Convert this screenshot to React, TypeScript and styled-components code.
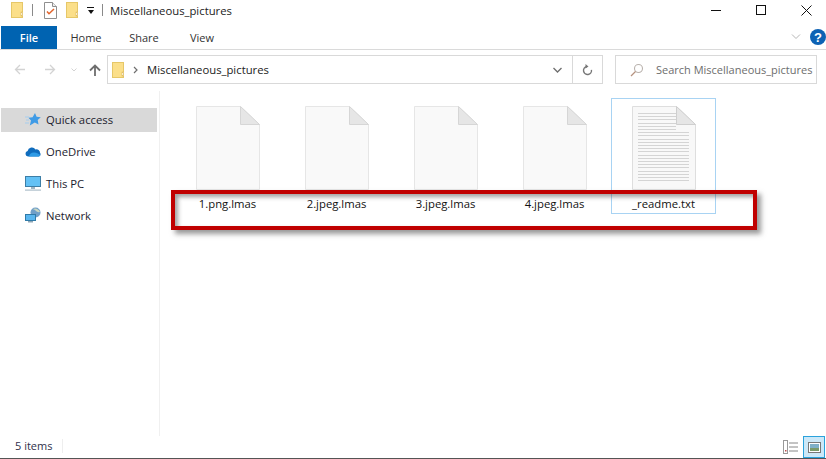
import React from "react";
import styled, { createGlobalStyle } from "styled-components";

const GlobalStyle = createGlobalStyle`
  html, body {
    margin: 0;
    padding: 0;
    background: #fff;
  }
  * {
    box-sizing: border-box;
  }
`;

const FolderIcon = () => (
  <svg width="12" height="16" viewBox="0 0 12 16">
    <rect x="0.5" y="0.5" width="11" height="15" fill="#fbdf8a" stroke="#e6c768" />
    <rect x="10" y="10" width="1.5" height="4" fill="#fff" stroke="#d9b24a" strokeWidth="0.5" />
  </svg>
);

const CheckDocIcon = () => (
  <svg width="13" height="17" viewBox="0 0 13 17">
    <path d="M.5.5h8l4 4v12H.5z" fill="#fff" stroke="#8f8f8f" />
    <path d="M8.5.5v4h4" fill="#eee" stroke="#8f8f8f" />
    <path d="M3 9.500l2 2.200 5-4.700" fill="none" stroke="#e2632b" strokeWidth="1.500" />
  </svg>
);

const BlankFile = () => (
  <svg width="64" height="84" viewBox="0 0 64 84">
    <path d="M.5.5h44l19 18v65H.5z" fill="#f9f9f9" stroke="#e6e6e6" />
    <path d="M44.500.5v18h19z" fill="#e6e6e6" stroke="#d6d6d6" />
  </svg>
);

const TextFile = () => (
  <svg width="64" height="84" viewBox="0 0 64 84">
    <path d="M.5.5h44l19 18v65H.5z" fill="#f8f8f8" stroke="#dedede" />
    <path d="M44.500.5v18h19z" fill="#e6e6e6" stroke="#cfcfcf" />
    {Array.from({ length: 22 }).map((_, i) => (
      <rect key={i} x="6" y={7 + Math.round(i * 3.2)} width={i < 6 ? 38 : 51} height="1" fill="#d4d4d4" />
    ))}
  </svg>
);

const StarIcon = () => (
  <svg width="16" height="15" viewBox="0 0 16 15">
    <path d="M10 1l1.600 3.800 4.200.5-3.100 2.800.8 4.400L9.800 10.400l-5 3 1.200-5-2.600-2.600 4.200-.6z" fill="#3f9be6" />
    <path d="M0 5h4M1 8h3M0 11h4" stroke="#a5cdee" strokeWidth="1" />
  </svg>
);

const CloudIcon = () => (
  <svg width="16" height="11" viewBox="0 0 16 11">
    <path d="M3 10.500a2.800 2.800 0 0 1-.4-5.500A4.300 4.300 0 0 1 10.500 3.500 3.400 3.400 0 0 1 15 6.800c1 .8.800 3.700-1.500 3.700z" fill="#0f6cbd" />
    <path d="M4 10.500c0-2 2-4 5-4s5 1.500 6.300 2.500c-.3.900-1 1.500-2 1.500z" fill="#2e9be6" />
  </svg>
);

const PcIcon = () => (
  <svg width="16" height="15" viewBox="0 0 16 15">
    <rect x="0.500" y="0.500" width="15" height="10" fill="#63c1f5" stroke="#3d7ea6" />
    <rect x="6" y="11" width="4" height="2" fill="#9fb4c2" />
    <rect x="0" y="13.500" width="16" height="1.200" fill="#aebfca" />
  </svg>
);

const NetworkIcon = () => (
  <svg width="16" height="16" viewBox="0 0 16 16">
    <circle cx="10.500" cy="5.500" r="5" fill="#6f9fc9" />
    <path d="M8 2c2-1.500 6 0 7 3-2 .5-4-.5-4.500-1.500S9 3 8 2z" fill="#c9d6c0" />
    <rect x="0.500" y="7.500" width="10" height="6" fill="#59b6ef" stroke="#2f7aa8" />
    <rect x="3" y="14" width="5" height="1.500" fill="#8ea6b5" />
  </svg>
);

const SearchIcon = () => (
  <svg width="14" height="14" viewBox="0 0 14 14">
    <circle cx="8.500" cy="5.500" r="4" fill="none" stroke="#b9b2ad" strokeWidth="1.100" />
    <path d="M5.500 8.500L1 13" stroke="#b6927f" strokeWidth="1.200" />
  </svg>
);

const HelpBadge = styled.span`
  width: 16px;
  height: 16px;
  border-radius: 50%;
  background: #0d62b4;
  color: #fff;
  display: flex;
  align-items: center;
  justify-content: center;
  font-family: "Liberation Sans", sans-serif;
  font-size: 13px;
  font-weight: 700;
`;

const Window = styled.div`
  position: relative;
  width: 826px;
  height: 459px;
  display: flex;
  flex-direction: column;
  overflow: hidden;
  background: #fff;
  font-family: "Open Sans", "Noto Sans", "Liberation Sans", sans-serif;
  font-size: 11.3px;
  color: #1a1a1a;
`;

const TitleBar = styled.div`
  height: 26px;
  display: flex;
  align-items: center;
  padding: 0 0 6px 11px;
  flex-shrink: 0;
`;

const TitleIcon = styled.span<{ $left?: number }>`
  display: flex;
  margin-left: ${(p) => p.$left ?? 0}px;
`;

const TitleDivider = styled.span<{ $left: number }>`
  width: 1px;
  height: 12px;
  background: #8a8a8a;
  margin-left: ${(p) => p.$left}px;
`;

const QuickMenu = styled.span`
  width: 7px;
  height: 7px;
  margin-left: 9px;
  border-top: 1px solid #111;
  display: flex;
  flex-direction: column;
  align-items: center;
  &::before {
    content: "";
    margin-top: 2px;
    border-left: 3.5px solid transparent;
    border-right: 3.5px solid transparent;
    border-top: 4px solid #111;
  }
`;

const TitleText = styled.span`
  margin-left: 7px;
  color: #222;
`;

const WindowButtons = styled.div`
  margin-left: auto;
  display: flex;
  align-items: center;
  gap: 35px;
  padding-right: 14px;
`;

const MinimizeGlyph = styled.span`
  width: 10px;
  height: 1px;
  background: #111;
`;

const MaximizeGlyph = styled.span`
  width: 10px;
  height: 10px;
  border: 1px solid #111;
`;

const CloseGlyph = styled.svg`
  width: 11px;
  height: 11px;
`;

const Ribbon = styled.div`
  height: 24px;
  display: flex;
  align-items: stretch;
  border-bottom: 1px solid #dadada;
  flex-shrink: 0;
  padding-left: 1px;
`;

const FileTab = styled.div`
  width: 56px;
  background: #0063b1;
  color: #fff;
  display: flex;
  align-items: center;
  justify-content: center;
  font-size: 11px;
  font-weight: 600;
`;

const RibbonTab = styled.div`
  width: 58px;
  display: flex;
  align-items: center;
  justify-content: center;
  font-size: 11px;
  color: #333;
`;

const RibbonEnd = styled.div`
  margin-left: auto;
  display: flex;
  align-items: center;
  gap: 9px;
  padding-bottom: 1px;
`;

const NavBar = styled.div`
  height: 41px;
  display: flex;
  align-items: flex-start;
  padding-top: 5px;
  flex-shrink: 0;
`;

const NavButtons = styled.div`
  width: 107px;
  height: 29px;
  display: flex;
  align-items: center;
  padding-left: 14px;
`;

const NavGlyph = styled.svg<{ $left?: number }>`
  margin-left: ${(p) => p.$left ?? 0}px;
  flex-shrink: 0;
`;

const AddressBox = styled.div`
  width: 496px;
  height: 29px;
  border: 1px solid #d9d9d9;
  display: flex;
  align-items: center;
  padding-left: 4px;
`;

const Crumb = styled.span`
  margin-left: 9px;
  color: #222;
`;

const AddressEnd = styled.div`
  margin-left: auto;
  height: 100%;
  display: flex;
  align-items: center;
`;

const RefreshCell = styled.div`
  width: 30px;
  height: 100%;
  border-left: 1px solid #d9d9d9;
  display: flex;
  align-items: center;
  justify-content: center;
`;

const DropCell = styled.div`
  width: 30px;
  display: flex;
  justify-content: center;
`;

const SearchBox = styled.div`
  margin-left: 12px;
  width: 202px;
  height: 29px;
  border: 1px solid #d9d9d9;
  display: flex;
  align-items: center;
  padding-left: 14px;
  gap: 12px;
  font-size: 11px;
  color: #6d6d6d;
  white-space: nowrap;
  overflow: hidden;
`;

const Main = styled.div`
  flex: 1;
  min-height: 0;
  display: flex;
`;

const Sidebar = styled.nav`
  width: 160px;
  border-right: 1px solid #f0f0f0;
  padding: 17px 2px 0 1px;
  display: flex;
  flex-direction: column;
  gap: 8px;
  flex-shrink: 0;
`;

const NavRow = styled.div<{ $active?: boolean }>`
  height: 24px;
  display: flex;
  align-items: center;
  gap: 5px;
  padding: 0 0 2px 24px;
  background: ${(p) => (p.$active ? "#d9d9d9" : "transparent")};
  color: #1c1c2e;
`;

const NavIcon = styled.span`
  width: 16px;
  display: flex;
  justify-content: center;
`;

const FileGrid = styled.section`
  padding: 7px 0 0 15px;
  display: flex;
  gap: 4px;
  align-items: flex-start;
`;

const FileItem = styled.div<{ $selected?: boolean }>`
  width: 105px;
  height: 116px;
  border: 1px solid ${(p) => (p.$selected ? "#a8d3f3" : "transparent")};
  display: flex;
  flex-direction: column;
  align-items: center;
  padding-top: 7px;
`;

const FileName = styled.span`
  margin-top: 6px;
  line-height: 16px;
  color: #111;
`;

const Highlight = styled.div`
  position: absolute;
  left: 171px;
  top: 190px;
  width: 586px;
  height: 40px;
  border: 4px solid #c00000;
  box-shadow: 4px 4px 5px rgba(70, 70, 70, 0.55), inset 3px 3px 4px rgba(70, 70, 70, 0.5);
  pointer-events: none;
`;

const StatusBar = styled.footer`
  height: 23px;
  flex-shrink: 0;
  display: flex;
  align-items: center;
  padding: 0 1px 3px 15px;
  border-bottom: 1px solid #555;
  font-size: 11px;
  color: #30304a;
`;

const StatusDivider = styled.span`
  width: 1px;
  height: 14px;
  background: #eee;
  margin-left: 10px;
`;

const ViewSwitch = styled.div`
  margin: 0 0 -3px auto;
  display: flex;
  align-items: center;
  gap: 3px;
`;

const ViewButton = styled.div<{ $active?: boolean }>`
  width: ${(p) => (p.$active ? 22 : 18)}px;
  height: 22px;
  display: flex;
  align-items: center;
  justify-content: center;
  background: ${(p) => (p.$active ? "#cce8f8" : "transparent")};
  border: ${(p) => (p.$active ? "1px solid #2ba2dc" : "none")};
`;

const files = [
  { name: "1.png.lmas" },
  { name: "2.jpeg.lmas" },
  { name: "3.jpeg.lmas" },
  { name: "4.jpeg.lmas" },
  { name: "_readme.txt", selected: true },
];

const places = [
  { label: "Quick access", icon: <StarIcon />, active: true },
  { label: "OneDrive", icon: <CloudIcon /> },
  { label: "This PC", icon: <PcIcon /> },
  { label: "Network", icon: <NetworkIcon /> },
];

export default function App() {
  return (
    <Window>
      <GlobalStyle />
      <TitleBar>
        <TitleIcon>
          <FolderIcon />
        </TitleIcon>
        <TitleDivider $left={9} />
        <TitleIcon $left={11}>
          <CheckDocIcon />
        </TitleIcon>
        <TitleIcon $left={9}>
          <FolderIcon />
        </TitleIcon>
        <QuickMenu />
        <TitleDivider $left={8} />
        <TitleText>Miscellaneous_pictures</TitleText>
        <WindowButtons>
          <MinimizeGlyph />
          <MaximizeGlyph />
          <CloseGlyph viewBox="0 0 11 11">
            <path d="M.5.500l10 10M10.500.500l-10 10" stroke="#111" fill="none" />
          </CloseGlyph>
        </WindowButtons>
      </TitleBar>
      <Ribbon>
        <FileTab>File</FileTab>
        <RibbonTab>Home</RibbonTab>
        <RibbonTab>Share</RibbonTab>
        <RibbonTab>View</RibbonTab>
        <RibbonEnd>
          <svg width="10" height="6" viewBox="0 0 10 6">
            <path d="M1 .500l4 4 4-4" fill="none" stroke="#b5b5b5" />
          </svg>
          <HelpBadge>?</HelpBadge>
        </RibbonEnd>
      </Ribbon>
      <NavBar>
        <NavButtons>
          <NavGlyph width="12" height="11" viewBox="0 0 12 11">
            <path d="M11 5.500H1.500M6 1L1.500 5.500 6 10" fill="none" stroke="#d3d3d3" strokeWidth="1.300" />
          </NavGlyph>
          <NavGlyph width="12" height="11" viewBox="0 0 12 11" $left={18}>
            <path d="M1 5.500h9.500M6 1l4.500 4.500L6 10" fill="none" stroke="#d3d3d3" strokeWidth="1.300" />
          </NavGlyph>
          <NavGlyph width="6" height="4" viewBox="0 0 6 4" $left={15}>
            <path d="M.5.500L3 3 5.500.500" fill="none" stroke="#d3d3d3" />
          </NavGlyph>
          <NavGlyph width="12" height="12" viewBox="0 0 12 12" $left={12}>
            <path d="M6 12V1.500M1 6.500l5-5 5 5" fill="none" stroke="#6e6e6e" strokeWidth="1.800" />
          </NavGlyph>
        </NavButtons>
        <AddressBox>
          <FolderIcon />
          <NavGlyph width="5" height="8" viewBox="0 0 5 8" $left={9}>
            <path d="M1 1l3 3-3 3" fill="none" stroke="#6e6e6e" strokeWidth="1.200" />
          </NavGlyph>
          <Crumb>Miscellaneous_pictures</Crumb>
          <AddressEnd>
            <DropCell>
              <svg width="9" height="6" viewBox="0 0 9 6">
                <path d="M.500 1l4 4 4-4" fill="none" stroke="#6e6e6e" strokeWidth="1.300" />
              </svg>
            </DropCell>
            <RefreshCell>
              <svg width="11" height="12" viewBox="0 0 11 12">
                <path d="M5.500 2.500a4 4 0 1 1-4 4" fill="none" stroke="#777" strokeWidth="1.400" transform="rotate(80 5.500 6.500)" />
                <path d="M3.500 0l3 2.500-3 2z" fill="#777" />
              </svg>
            </RefreshCell>
          </AddressEnd>
        </AddressBox>
        <SearchBox>
          <SearchIcon />
          <span>Search Miscellaneous_pictures</span>
        </SearchBox>
      </NavBar>
      <Main>
        <Sidebar>
          {places.map((place) => (
            <NavRow key={place.label} $active={place.active}>
              <NavIcon>{place.icon}</NavIcon>
              {place.label}
            </NavRow>
          ))}
        </Sidebar>
        <FileGrid>
          {files.map((file) => (
            <FileItem key={file.name} $selected={file.selected}>
              {file.selected ? <TextFile /> : <BlankFile />}
              <FileName>{file.name}</FileName>
            </FileItem>
          ))}
        </FileGrid>
      </Main>
      <StatusBar>
        5 items
        <StatusDivider />
        <ViewSwitch>
          <ViewButton>
            <svg width="16" height="14" viewBox="0 0 16 14">
              <rect x="0.500" y="0.500" width="4" height="13" fill="#fff" stroke="#999" />
              <path d="M6 3h9M6 7h9M6 11h9" stroke="#888" />
              <rect x="2" y="10" width="1.500" height="1.500" fill="#c0504d" />
            </svg>
          </ViewButton>
          <ViewButton $active>
            <svg width="13" height="11" viewBox="0 0 13 11">
              <rect x="0.500" y="0.500" width="12" height="10" fill="#fff" stroke="#777" />
              <rect x="2" y="2" width="9" height="4" fill="#7fb0c8" />
              <rect x="2" y="6" width="9" height="3" fill="#7a9a6a" />
            </svg>
          </ViewButton>
        </ViewSwitch>
      </StatusBar>
      <Highlight />
    </Window>
  );
}
